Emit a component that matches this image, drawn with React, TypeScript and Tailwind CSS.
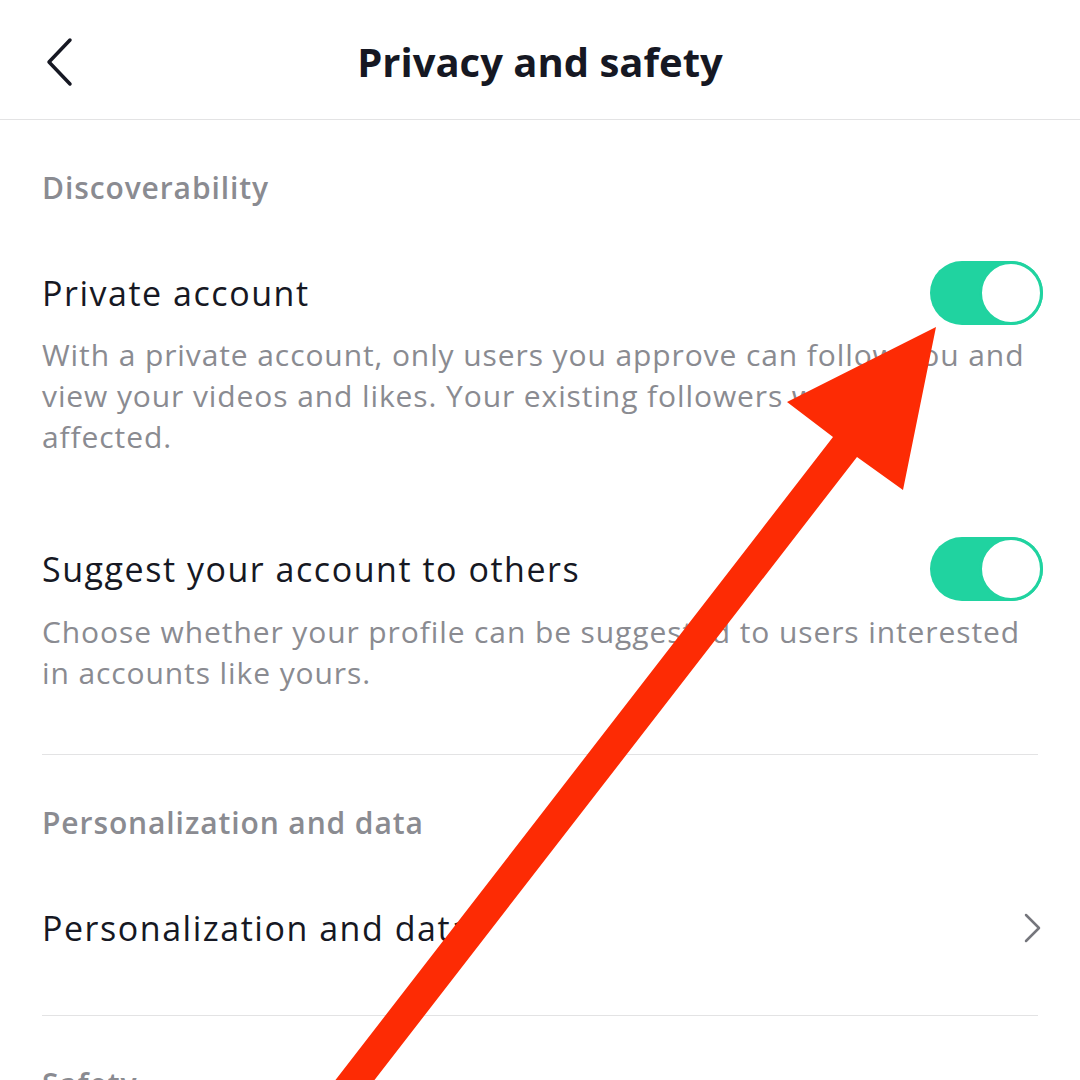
import React from "react";

const font = { fontFamily: "'Open Sans', Lato, sans-serif" };

function Toggle() {
  return (
    <div className="relative w-[113px] h-[64px] -mr-[5px] shrink-0 rounded-full bg-[#20d3a0]">
      <div className="absolute right-0 top-0 h-[64px] w-[64px] rounded-full border-[3px] border-[#20d3a0] bg-white" />
    </div>
  );
}

function SectionHeader({ children, className = "" }: { children: React.ReactNode; className?: string }) {
  return (
    <p className={`h-[40px] leading-[40px] text-[30px] tracking-[0.03em] font-semibold text-[#8a8b91] ${className}`}>
      {children}
    </p>
  );
}

function RowTitle({ children }: { children: React.ReactNode }) {
  return <span className="text-[34px] leading-[40px] tracking-[0.045em]">{children}</span>;
}

export default function App() {
  return (
    <div className="relative w-[1080px] h-[1080px] overflow-hidden bg-white text-[#161823]" style={font}>
      <header className="grid grid-cols-[1fr_auto_1fr] items-center h-[120px] pt-[4px] border-b border-[#e3e3e4]">
        <div className="pl-[44px]">
          <svg width="32" height="50" viewBox="0 0 32 50" fill="none">
            <path d="M26 3 L5 25 L26 47" stroke="#161823" strokeWidth="3.5" strokeLinecap="round" strokeLinejoin="round" />
          </svg>
        </div>
        <h1 className="text-[40px] font-bold leading-[48px]">Privacy and safety</h1>
        <div />
      </header>

      <main className="px-[42px]">
        <SectionHeader className="mt-[48px]">Discoverability</SectionHeader>

        <div className="mt-[65px] flex items-center justify-between h-[40px]">
          <RowTitle>Private account</RowTitle>
          <Toggle />
        </div>
        <p className="mt-[21px] text-[30px] leading-[41px] tracking-[0.03em] text-[#8a8b91]">
          With a private account, only users you approve can follow you and
          <br />
          view your videos and likes. Your existing followers won't be
          <br />
          affected.
        </p>

        <div className="mt-[92px] flex items-center justify-between h-[40px]">
          <RowTitle>Suggest your account to others</RowTitle>
          <Toggle />
        </div>
        <p className="mt-[22px] text-[30px] leading-[41px] tracking-[0.03em] text-[#8a8b91]">
          Choose whether your profile can be suggested to users interested
          <br />
          in accounts like yours.
        </p>

        <div className="mt-[61px] border-t border-[#e3e3e4]" />

        <SectionHeader className="mt-[48px]">Personalization and data</SectionHeader>

        <div className="mt-[65px] flex items-center justify-between h-[40px]">
          <RowTitle>Personalization and data</RowTitle>
          <svg width="20" height="32" viewBox="0 0 20 32" fill="none" className="-mr-[4px]">
            <path d="M4 3 L17 16 L4 29" stroke="#75767c" strokeWidth="2.5" strokeLinecap="round" strokeLinejoin="round" />
          </svg>
        </div>

        <div className="mt-[67px] border-t border-[#e3e3e4]" />

        <SectionHeader className="mt-[48px]">Safety</SectionHeader>
      </main>

      <svg className="absolute inset-0 pointer-events-none" width="1080" height="1080" viewBox="0 0 1080 1080">
        <polygon
          points="936,327 787,402 833,437 320,1100 359,1100 857,457 903,490"
          fill="#fd2b04"
        />
      </svg>
    </div>
  );
}
